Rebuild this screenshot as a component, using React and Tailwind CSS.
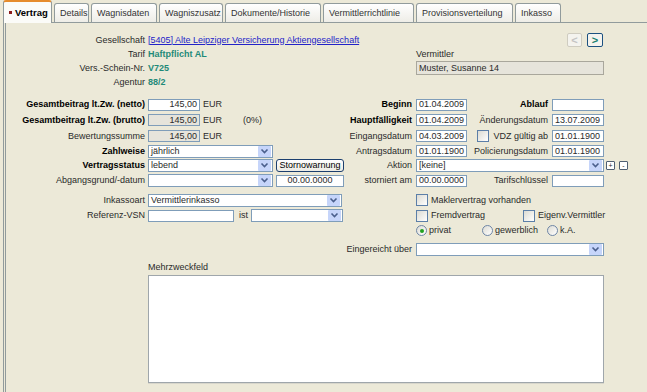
import React from "react";

const tabs = [
  { label: "Vertrag", w: "w-[49px]", active: true },
  { label: "Details", w: "w-[35px]" },
  { label: "Wagnisdaten", w: "w-[66px]" },
  { label: "Wagniszusatz", w: "w-[64px]" },
  { label: "Dokumente/Historie", w: "w-[96px]" },
  { label: "Vermittlerrichtlinie", w: "w-[91px]" },
  { label: "Provisionsverteilung", w: "w-[97px]" },
  { label: "Inkasso", w: "w-[46px]" },
];

function Lbl({ children, w = "w-[139px]", bold }) {
  return (
    <div
      className={`${w} shrink-0 flex justify-end whitespace-nowrap ${
        bold ? "font-bold text-black" : "text-[#2a2a2a]"
      }`}
    >
      {children}
    </div>
  );
}

function Box({ w, grey, center, children }) {
  return (
    <div
      className={`${w} shrink-0 h-[12px] border border-[#7F9DB9] flex items-center px-[2px] whitespace-nowrap ${
        grey ? "bg-[#E6E4DB]" : "bg-white"
      } ${center ? "justify-center" : ""}`}
    >
      {children}
    </div>
  );
}

function Select({ w, value }) {
  return (
    <div className={`${w} shrink-0 h-[13px] border border-[#7F9DB9] bg-white flex items-center`}>
      <span className="flex-1 pl-[2px] whitespace-nowrap">{value}</span>
      <div className="w-[13px] h-[11px] mr-px bg-[#C6D5FA] rounded-[1px] flex items-center justify-center">
        <svg width="9" height="7" viewBox="0 0 9 7">
          <path d="M1.5 1.5 L4.5 4.5 L7.5 1.5" stroke="#4A5F8C" strokeWidth="1.6" fill="none" />
        </svg>
      </div>
    </div>
  );
}

function Check({ className = "" }) {
  return (
    <div
      className={`w-[12px] h-[12px] shrink-0 border border-[#5C7FA8] bg-gradient-to-br from-[#DCDBD3] to-white ${className}`}
    />
  );
}

function Radio({ on }) {
  return (
    <div className="w-[11px] h-[11px] shrink-0 rounded-full border border-[#6E86A6] bg-gradient-to-br from-[#DCDBD3] to-white flex items-center justify-center">
      {on && <div className="w-[4px] h-[4px] rounded-full bg-[#21A121]" />}
    </div>
  );
}

const teal = "font-bold text-[#1F8A78]";

export default function App() {
  return (
    <div className="w-[647px] h-[392px] overflow-hidden bg-[#ECE9D8] font-['Liberation_Sans',Arial,sans-serif] text-[9px] leading-none text-[#2a2a2a] flex flex-col">
      {/* tabs */}
      <div className="h-[22px] flex items-end pl-[3px] gap-[2px] shrink-0">
        {tabs.map((t) =>
          t.active ? (
            <div
              key={t.label}
              className={`${t.w} h-[23px] -mb-px relative z-10 border border-b-0 border-[#919B9C] border-t-2 border-t-[#E68B2C] rounded-t-[3px] bg-[#FBFBF8] flex items-center pl-[5px] font-bold text-black text-[9.5px]`}
            >
              <span className="w-[3px] h-[3px] bg-[#8B1A1A] mr-[3px]" />
              {t.label}
            </div>
          ) : (
            <div
              key={t.label}
              className={`${t.w} h-[19px] border border-b-0 border-[#919B9C] rounded-t-[3px] bg-gradient-to-b from-white to-[#EEEDE7] flex items-center pl-[5px] whitespace-nowrap text-[#333]`}
            >
              {t.label}
            </div>
          )
        )}
      </div>

      {/* panel */}
      <div className="flex-1 ml-[3px] border-t border-l-[3px] border-double border-[#919B9C] pt-[10px] flex flex-col">
        {/* top block */}
        <div className="h-[14px] flex items-center">
          <Lbl>Gesellschaft</Lbl>
          <span className="ml-[3px] flex-1 text-[#2323C8] underline whitespace-nowrap">
            [5405] Alte Leipziger Versicherung Aktiengesellschaft
          </span>
          <div className="w-[15px] h-[14px] border border-[#CFCCC0] rounded-[2px] bg-[#F4F3EE] text-[#C4C4C4] font-bold text-[11px] flex items-center justify-center">
            &lt;
          </div>
          <div className="ml-[5px] mr-[44px] w-[16px] h-[14px] border border-[#1C5180] rounded-[2px] bg-[#F4F3EE] text-[#17806E] font-bold text-[11px] flex items-center justify-center">
            &gt;
          </div>
        </div>
        <div className="h-[14px] flex items-center">
          <div className="w-[410px] flex items-center">
            <Lbl>Tarif</Lbl>
            <span className={`ml-[3px] ${teal}`}>Haftpflicht AL</span>
          </div>
          <span>Vermittler</span>
        </div>
        <div className="h-[14px] flex items-center">
          <div className="w-[410px] flex items-center">
            <Lbl>Vers.-Schein-Nr.</Lbl>
            <span className={`ml-[3px] ${teal}`}>V725</span>
          </div>
          <div className="w-[188px] h-[14px] border border-[#A9A79C] bg-[#E6E4DB] flex items-center px-[2px]">
            Muster, Susanne 14
          </div>
        </div>
        <div className="h-[14px] flex items-center">
          <Lbl>Agentur</Lbl>
          <span className={`ml-[3px] ${teal}`}>88/2</span>
        </div>

        {/* middle rows */}
        <div className="mt-[8px] h-[15px] flex items-center">
          <div className="w-[340px] flex items-center">
            <Lbl bold>Gesamtbeitrag lt.Zw. (netto)</Lbl>
            <div className="ml-[3px]" />
            <Box w="w-[52px] justify-end">145,00</Box>
            <span className="ml-[3px]">EUR</span>
          </div>
          <Lbl w="w-[66px]" bold>Beginn</Lbl>
          <div className="ml-[4px]" />
          <Box w="w-[51px]">01.04.2009</Box>
          <Lbl w="w-[81px]" bold>Ablauf</Lbl>
          <div className="ml-[4px]" />
          <Box w="w-[52px]" />
        </div>
        <div className="h-[16px] flex items-center">
          <div className="w-[340px] flex items-center">
            <Lbl bold>Gesamtbeitrag lt.Zw. (brutto)</Lbl>
            <div className="ml-[3px]" />
            <Box w="w-[52px] justify-end" grey>145,00</Box>
            <span className="ml-[3px]">EUR</span>
            <span className="ml-[21px]">(0%)</span>
          </div>
          <Lbl w="w-[66px]" bold>Hauptfälligkeit</Lbl>
          <div className="ml-[4px]" />
          <Box w="w-[51px]">01.04.2009</Box>
          <Lbl w="w-[81px]">Änderungsdatum</Lbl>
          <div className="ml-[4px]" />
          <Box w="w-[52px]">13.07.2009</Box>
        </div>
        <div className="h-[16px] flex items-center">
          <div className="w-[340px] flex items-center">
            <Lbl>Bewertungssumme</Lbl>
            <div className="ml-[3px]" />
            <Box w="w-[52px] justify-end" grey>145,00</Box>
            <span className="ml-[3px]">EUR</span>
          </div>
          <Lbl w="w-[66px]">Eingangsdatum</Lbl>
          <div className="ml-[4px]" />
          <Box w="w-[51px]">04.03.2009</Box>
          <div className="w-[81px] flex items-center justify-between pl-[10px]">
            <Check />
            <span className="whitespace-nowrap">VDZ gültig ab</span>
          </div>
          <div className="ml-[4px]" />
          <Box w="w-[52px]">01.01.1900</Box>
        </div>
        <div className="h-[14px] flex items-center">
          <div className="w-[340px] flex items-center">
            <Lbl bold>Zahlweise</Lbl>
            <div className="ml-[3px]" />
            <Select w="w-[125px]" value="jährlich" />
          </div>
          <Lbl w="w-[66px]">Antragsdatum</Lbl>
          <div className="ml-[4px]" />
          <Box w="w-[51px]">01.01.1900</Box>
          <Lbl w="w-[81px]">Policierungsdatum</Lbl>
          <div className="ml-[4px]" />
          <Box w="w-[52px]">01.01.1900</Box>
        </div>
        <div className="h-[15px] flex items-center">
          <div className="w-[340px] flex items-center">
            <Lbl bold>Vertragsstatus</Lbl>
            <div className="ml-[3px]" />
            <Select w="w-[125px]" value="lebend" />
            <div className="ml-[3px] w-[68px] h-[13px] border border-[#1C3F6E] rounded-[3px] bg-gradient-to-b from-white to-[#ECEBE4] flex items-center justify-center whitespace-nowrap text-black">
              Stornowarnung
            </div>
          </div>
          <Lbl w="w-[66px]">Aktion</Lbl>
          <div className="ml-[4px]" />
          <Select w="w-[188px]" value="[keine]" />
          <div className="ml-[2px] w-[9px] h-[9px] border border-[#4F5F72] rounded-[1px] bg-white flex items-center justify-center text-[7px] leading-none">
            +
          </div>
          <div className="ml-[4px] w-[9px] h-[9px] border border-[#4F5F72] rounded-[1px] bg-white flex items-center justify-center text-[7px] leading-none">
            -
          </div>
        </div>
        <div className="h-[15px] flex items-center">
          <div className="w-[340px] flex items-center">
            <Lbl>Abgangsgrund/-datum</Lbl>
            <div className="ml-[3px]" />
            <Select w="w-[125px]" value="" />
            <div className="ml-[3px]" />
            <Box w="w-[68px]" center>00.00.0000</Box>
          </div>
          <Lbl w="w-[66px]">storniert am</Lbl>
          <div className="ml-[4px]" />
          <Box w="w-[51px]">00.00.0000</Box>
          <Lbl w="w-[81px]">Tarifschlüssel</Lbl>
          <div className="ml-[4px]" />
          <Box w="w-[52px]" />
        </div>

        <div className="mt-[4px] h-[16px] flex items-center">
          <div className="w-[340px] flex items-center">
            <Lbl>Inkassoart</Lbl>
            <div className="ml-[3px]" />
            <Select w="w-[194px]" value="Vermittlerinkasso" />
          </div>
          <div className="w-[70px]" />
          <Check />
          <span className="ml-[3px] whitespace-nowrap">Maklervertrag vorhanden</span>
        </div>
        <div className="h-[15px] flex items-center">
          <div className="w-[340px] flex items-center">
            <Lbl>Referenz-VSN</Lbl>
            <div className="ml-[3px]" />
            <Box w="w-[86px]" />
            <span className="ml-[5px]">ist</span>
            <div className="ml-[3px]" />
            <Select w="w-[92px]" value="" />
          </div>
          <div className="w-[70px]" />
          <Check />
          <span className="ml-[3px] w-[92px] whitespace-nowrap">Fremdvertrag</span>
          <Check />
          <span className="ml-[3px] whitespace-nowrap">Eigenv.Vermittler</span>
        </div>
        <div className="h-[15px] flex items-center">
          <div className="w-[410px]" />
          <Radio on />
          <span className="ml-[2px] w-[53px]">privat</span>
          <Radio />
          <span className="ml-[2px] w-[52px]">gewerblich</span>
          <Radio />
          <span className="ml-[2px]">k.A.</span>
        </div>

        <div className="mt-[4px] h-[15px] flex items-center">
          <div className="w-[340px]" />
          <Lbl w="w-[66px]">Eingereicht über</Lbl>
          <div className="ml-[4px]" />
          <Select w="w-[188px]" value="" />
        </div>

        {/* Mehrzweckfeld */}
        <div className="mt-[5px] pl-[142px]">
          <div className="h-[10px] flex items-center">Mehrzweckfeld</div>
          <div className="mt-[3px] w-[456px] h-[108px] bg-white border border-[#9FA6AB] shadow-[0_1px_0_#D8D6CB]" />
        </div>
      </div>
    </div>
  );
}
